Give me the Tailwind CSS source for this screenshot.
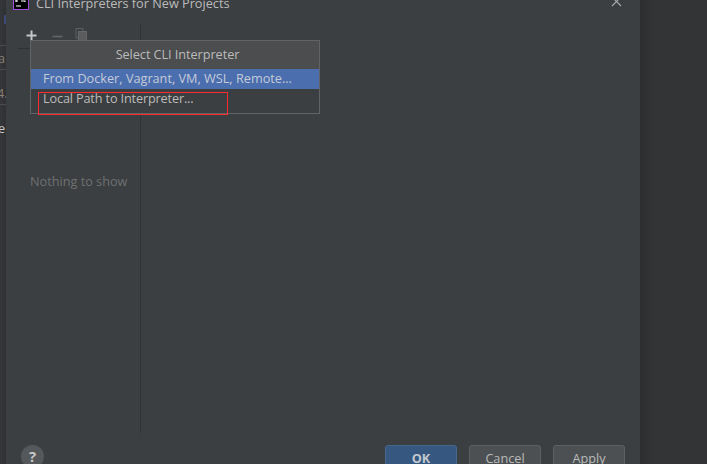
<!DOCTYPE html>
<html><head><meta charset="utf-8"><script src="https://cdn.jsdelivr.net/npm/@tailwindcss/browser@4"></script></head>
<body class="m-0 overflow-hidden bg-[#323436]">
<div class="relative flex h-[464px] w-[707px] overflow-hidden font-['Open_Sans','Noto_Sans',sans-serif] text-[12.7px] text-[#bbbbbb]">
  <!-- IDE behind, left strip -->
  <div class="relative w-[6px] shrink-0 overflow-hidden bg-gradient-to-r from-[#35373a] to-[#2e3032] leading-none text-[#8a7f72]">
    <div class="absolute left-[4px] top-[15px] h-[9px] w-[2px] bg-[#3d4a78]"></div>
    <div class="absolute left-0 top-[45px] h-px w-[6px] bg-[#4a4c4e]"></div>
    <div class="absolute left-[-2px] top-[52px]">a</div>
    <div class="absolute left-0 top-[69px] h-px w-[6px] bg-[#4a4c4e]"></div>
    <div class="absolute left-[-3px] top-[87px]">4.</div>
    <div class="absolute left-0 top-[104px] h-px w-[6px] bg-[#4a4c4e]"></div>
    <div class="absolute left-[-2px] top-[122px] text-[#c8c8c8]">e</div>
  </div>
  <!-- dialog -->
  <div class="flex h-full w-[634px] shrink-0 flex-col bg-[#3c3f41]">
    <div class="flex h-[24px] shrink-0 items-start">
      <svg class="ml-[7px] mt-[-6px] shrink-0" width="16" height="16" viewBox="0 0 16 16"><rect x=".5" y=".5" width="15" height="15" fill="#000" stroke="#a64be0"/><path d="M3 5 H6 M3 5 V8 M3 7 H5 M8 5 H12 M8 7 H12 V8 M3 12 H8" stroke="#fff" stroke-width="1.2" fill="none"/></svg>
      <div class="ml-[7px] mt-[-6px] whitespace-nowrap leading-[18px] text-[#bbbbbb]">CLI Interpreters for New Projects</div>
      <svg class="ml-[382px] mt-[-2px] shrink-0" width="11" height="10" viewBox="0 0 11 10"><path d="M1 -1 L10 8 M10 -1 L1 8" stroke="#a8aaab" stroke-width="1.1" fill="none"/></svg>
    </div>
    <div class="flex min-h-0 flex-1">
      <div class="flex w-[135px] shrink-0 flex-col border-r border-[#323232]">
        <div class="flex h-[24px] shrink-0 items-center pb-[2px] pl-[20px]">
          <svg width="11" height="11" viewBox="0 0 11 11"><path d="M5.5 0.5 V10.5 M0.5 5.5 H10.5" stroke="#c4c6c7" stroke-width="2"/></svg>
          <svg class="ml-[15px]" width="11" height="11" viewBox="0 0 11 11"><path d="M0.5 6.5 H10.5" stroke="#636567" stroke-width="1.6"/></svg>
          <svg class="ml-[12px]" width="13" height="14" viewBox="0 0 13 14" fill="none"><path d="M1 .5 H8 V3 M1 .5 V10 H3" stroke="#5f6163"/><rect x="3.5" y="3.5" width="8" height="9.5" fill="#5a5c5e" stroke="#646668"/></svg>
        </div>
        <div class="ml-[12px] h-px w-[12px] bg-[#323232]"></div>
        <div class="pl-[24px] pt-[123px] leading-[18px] text-[#6e7072]">Nothing to show</div>
      </div>
    </div>
    <div class="flex h-[31px] shrink-0 items-start pl-[15px] pt-[12px]">
      <div class="flex h-[23px] w-[23px] shrink-0 items-center justify-center rounded-full bg-[#55585a] text-[15px] font-bold text-[#c5c7c8]">?</div>
      <div class="ml-[341px] flex gap-[12px]">
        <div class="flex h-[40px] w-[72px] items-start justify-center rounded-[3px] border border-[#43688c] bg-[#365880] pt-[3px] font-bold text-[#c3c8cf]">OK</div>
        <div class="flex h-[40px] w-[72px] items-start justify-center rounded-[3px] border border-[#5e6060] bg-[#4c5052] pt-[3px]">Cancel</div>
        <div class="flex h-[40px] w-[72px] items-start justify-center rounded-[3px] border border-[#5e6060] bg-[#4c5052] pt-[3px]"><span><u>A</u>pply</span></div>
      </div>
    </div>
  </div>
  <div class="w-[14px] shrink-0 bg-gradient-to-r from-[#2c2e30] to-[#323436]"></div>
  <div class="flex-1 bg-[#323436]"></div>
  <!-- popup -->
  <div class="absolute left-[30px] top-[40px] flex h-[74px] w-[290px] flex-col border border-[#616365] bg-[#3c3f41]">
    <div class="flex h-[28px] shrink-0 items-center justify-center bg-[#4b4d4f] pl-[5px] tracking-[-0.05px] text-[#bbbbbb]">Select CLI Interpreter</div>
    <div class="flex h-[20px] shrink-0 items-center bg-[#4b6eaf] pl-[12px] text-[#c3cbd8]">From Docker, Vagrant, VM, WSL, Remote...</div>
    <div class="flex h-[20px] shrink-0 items-center pl-[12px] tracking-[-0.15px]">Local Path to Interpreter...</div>
  </div>
  <!-- red annotation -->
  <div class="absolute left-[38px] top-[92px] h-[23px] w-[190px] border border-[#ff2a2d]"></div>
</div>
</body></html>
